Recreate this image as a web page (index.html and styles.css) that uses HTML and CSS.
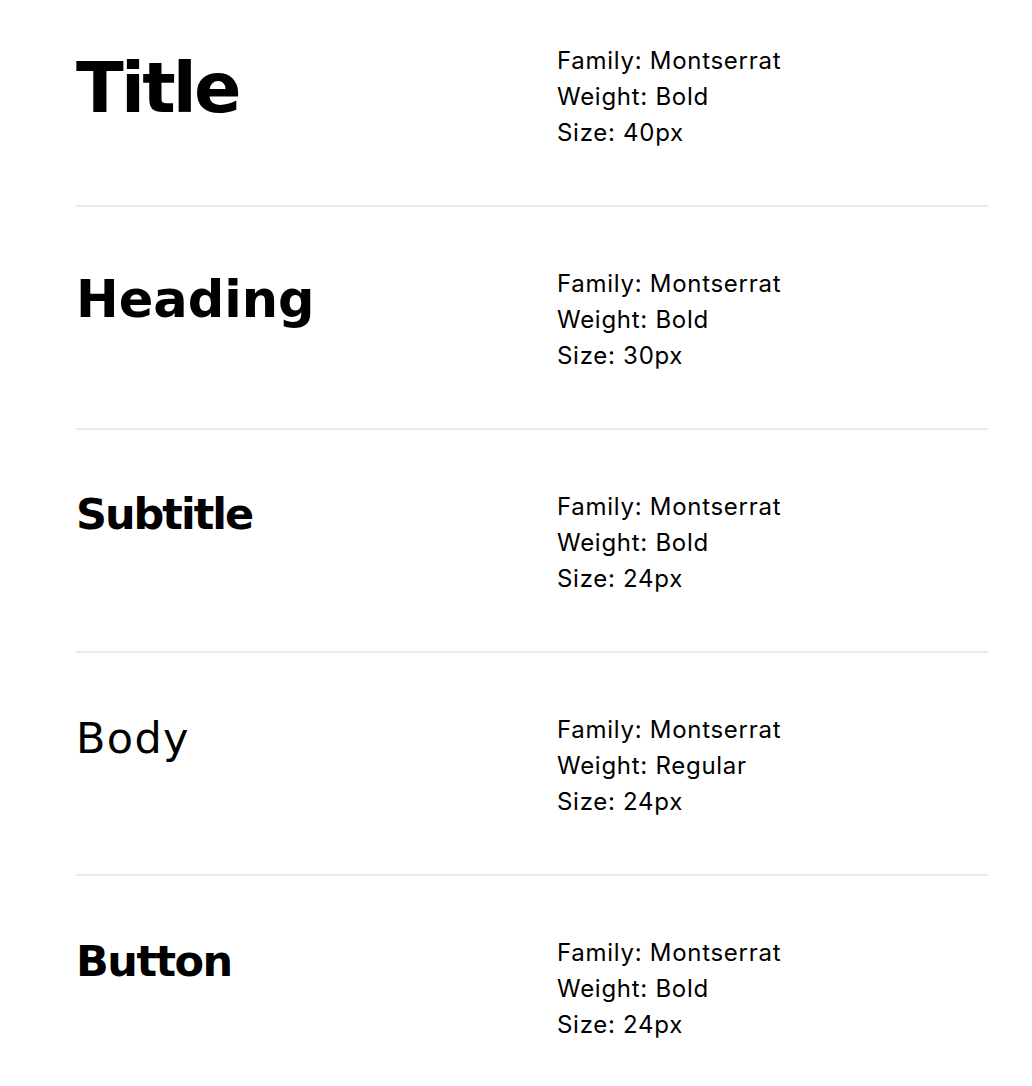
FILE: index.html
```html
<!DOCTYPE html>
<html lang="en">
<head>
<meta charset="utf-8">
<title>Typography</title>
<link rel="stylesheet" href="styles.css">
</head>
<body>
<main class="type-list">
  <section class="row">
    <div class="sample sample-title">Title</div>
    <div class="specs"><p>Family: Montserrat</p><p>Weight: Bold</p><p>Size: 40px</p></div>
  </section>
  <section class="row">
    <div class="sample sample-heading">Heading</div>
    <div class="specs"><p>Family: Montserrat</p><p>Weight: Bold</p><p>Size: 30px</p></div>
  </section>
  <section class="row">
    <div class="sample sample-subtitle">Subtitle</div>
    <div class="specs"><p>Family: Montserrat</p><p>Weight: Bold</p><p>Size: 24px</p></div>
  </section>
  <section class="row">
    <div class="sample sample-body">Body</div>
    <div class="specs"><p>Family: Montserrat</p><p>Weight: Regular</p><p>Size: 24px</p></div>
  </section>
  <section class="row">
    <div class="sample sample-button">Button</div>
    <div class="specs"><p>Family: Montserrat</p><p>Weight: Bold</p><p>Size: 24px</p></div>
  </section>
</main>
</body>
</html>
```
FILE: styles.css
```css
html, body {
  margin: 0;
  padding: 0;
  background: #ffffff;
}

.type-list {
  margin-left: 76px;
  width: 912px;
}

.row {
  display: grid;
  grid-template-columns: 481px 1fr;
  align-items: start;
  padding: 62px 0 51px;
  border-bottom: 2px solid #e9ebf3;
}

.row:first-child {
  padding-top: 46px;
}

.row:last-child {
  border-bottom: none;
}

.sample {
  font-family: "DejaVu Sans", sans-serif;
  font-weight: 700;
  line-height: 1;
  color: #000;
  white-space: nowrap;
}

.sample-title {
  font-size: 70px;
  letter-spacing: -2.8px;
  margin-top: 7px;
}

.sample-heading {
  font-size: 51px;
  letter-spacing: 0;
  margin-top: 5px;
}

.sample-subtitle {
  font-size: 43px;
  letter-spacing: -2px;
  margin-top: 1px;
}

.sample-body {
  font-size: 43px;
  font-weight: 400;
  letter-spacing: 1.3px;
  margin-top: 2px;
}

.sample-button {
  font-size: 43px;
  letter-spacing: -1.5px;
  margin-top: 2px;
}

.specs {
  font-family: Inter, "Liberation Sans", sans-serif;
  font-size: 24px;
  line-height: 36px;
  letter-spacing: 0.72px;
  color: #000;
  margin: -3px 0 3px;
}

.specs p {
  margin: 0;
}
```
